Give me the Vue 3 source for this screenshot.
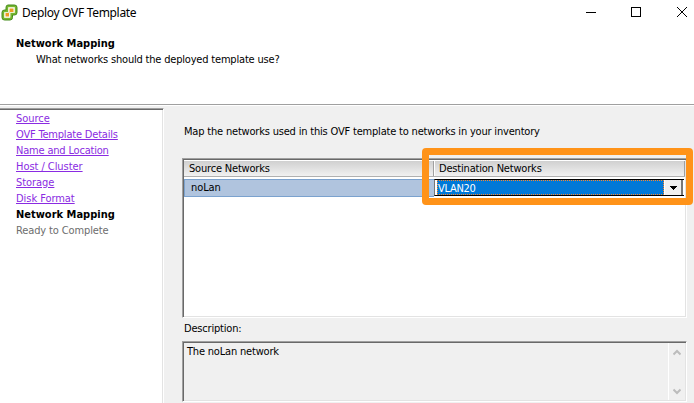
<script setup>
const visited = ['Source', 'OVF Template Details', 'Name and Location', 'Host / Cluster', 'Storage', 'Disk Format']
</script>

<template>
  <div class="window">
    <header class="titlebar">
      <svg class="logo" width="17" height="17" viewBox="0 0 17 17">
        <path d="M7 1h6.500q2.500 0 2.500 2.500v5q0 2.500-2.500 2.500h-2v2.500q0 2.500-2.500 2.500h-5.500q-2.500 0-2.500-2.500v-5q0-2.500 2.500-2.500h1.500v-2.500q0-2.500 2-2.500z" fill="#77b62e" stroke="#458b1c" />
        <path d="M7.500 3.500h6v5h-4.500v5h-5.500v-5h4z" fill="#fff" stroke="#e4f2d0" />
        <path d="M8.500 4.500h4v3.500h-3.500l-1 1v3.500h-3.500v-3.500h3l1-1z" fill="#ef9b22" />
      </svg>
      <span class="title">Deploy OVF Template</span>
      <svg class="controls" width="104" height="24" viewBox="0 0 104 24" shape-rendering="crispEdges">
        <path d="M0 12.500h10M45.500 7.500h9v9h-9z" fill="none" stroke="#000" />
        <path d="M91 7l10 10M101 7l-10 10" fill="none" stroke="#000" shape-rendering="auto" />
      </svg>
    </header>
    <section class="intro">
      <h1>Network Mapping</h1>
      <p>What networks should the deployed template use?</p>
    </section>
    <div class="body">
      <nav class="steps">
        <a v-for="s in visited" :key="s" :class="{ short: s.length < 15 }">{{ s }}</a>
        <b>Network Mapping</b>
        <span class="pending">Ready to Complete</span>
      </nav>
      <main class="content">
        <p class="lead">Map the networks used in this OVF template to networks in your inventory</p>
        <div class="table">
          <div class="thead">
            <div class="th source">Source Networks</div>
            <div class="th dest">Destination Networks</div>
          </div>
          <div class="row">
            <div class="name">noLan</div>
            <div class="combo">
              <div class="value">VLAN20</div>
              <div class="arrow">
                <svg width="7" height="4" viewBox="0 0 7 4" shape-rendering="crispEdges"><path d="M0 0h7v1h-1v1h-1v1h-1v1h-1v-1h-1v-1h-1v-1h-1z" /></svg>
              </div>
            </div>
          </div>
          <div class="highlight"></div>
        </div>
        <p class="label">Description:</p>
        <div class="desc">
          <div class="text">The noLan network</div>
          <div class="scroll">
            <svg width="8" height="7" viewBox="0 0 8 7"><path d="M.5 5.500L4 2l3.500 3.500" /></svg>
            <svg width="8" height="7" viewBox="0 0 8 7"><path d="M.5 1.500L4 5l3.500-3.500" /></svg>
          </div>
        </div>
      </main>
    </div>
  </div>
</template>

<style>
body { margin: 0; overflow: hidden; }
</style>

<style scoped>
* { box-sizing: border-box; }
h1, p { margin: 0; font-size: inherit; font-weight: inherit; }
.window { width: 694px; height: 403px; background: #fff; display: flex; flex-direction: column; overflow: hidden; font: 11px/16px "DejaVu Sans Condensed", "DejaVu Sans", sans-serif; font-stretch: condensed; letter-spacing: -0.19px; color: #000; white-space: nowrap; }
.titlebar { height: 24px; display: flex; flex: none; }
.logo { margin: 4px 0 0 1px; }
.title { font: 12px/24px "Noto Sans", sans-serif; letter-spacing: -0.31px; margin: 1px 0 0 4px; flex: 1; }
.controls { margin-right: 4px; }
.intro { height: 80px; padding: 12px 0 0 16px; flex: none; }
.intro p { padding-left: 20px; }
h1, b { font-weight: bold; letter-spacing: 0; }
.body { flex: 1; display: flex; background: #f0f0f0; border-top: 1px solid #a0a0a0; box-shadow: inset 0 1px #fff; padding-top: 3px; min-height: 0; }
.steps { width: 164px; height: 302px; background: #fff; border-top: 1px solid #a0a0a0; border-right: 1px solid #fff; box-shadow: inset 0 1px #696969, inset -1px 0 #e3e3e3; padding: 2px 0 0 16px; display: flex; flex-direction: column; align-items: flex-start; }
.steps a { color: #8a2be2; text-decoration: underline; text-underline-offset: 1px; text-decoration-thickness: 1px; }
.steps .short { letter-spacing: -0.05px; }
.pending { color: #6d6d6d; letter-spacing: -0.12px; }
.content { flex: 1; padding: 16px 0 0 18px; }
.lead { padding-left: 2px; height: 34px; }
.table { position: relative; width: 505px; height: 160px; background: #fff; border: 1px solid; border-color: #a0a0a0 #fff #fff #a0a0a0; box-shadow: inset 1px 1px #696969, inset -1px -1px #e3e3e3; padding: 1px; }
.thead { display: flex; height: 17px; border-top: 1px solid #fff; border-bottom: 1px solid #b0b0b0; background: linear-gradient(#d0d0d0, #f1f1f1); line-height: 15px; }
.th { padding-left: 5px; }
.source { width: 250px; border-right: 1px solid #a0a0a0; }
.dest { flex: 1; border-left: 1px solid #fff; border-right: 1px solid #a0a0a0; padding-left: 4px; }
.row { display: flex; height: 18px; margin-top: 2px; }
.name { width: 250px; background: #b0c4de; border: 1px solid #7ba2ce; border-right: 0; padding-left: 6px; line-height: 15px; letter-spacing: -0.1px; }
.combo { width: 250px; height: 17px; display: flex; border-top: 1px solid #000; border-bottom: 1px solid #000; border-left: 1px solid #777; padding-left: 2px; }
.value { width: 227px; background: #0078d7; border: 1px dotted #ff8728; color: #fff; line-height: 15px; letter-spacing: -0.3px; }
.arrow { width: 18px; margin-left: 1px; background: #f0f0f0; border-right: 2px solid #777; display: flex; justify-content: center; align-items: center; padding-left: 1px; }
.highlight { position: absolute; left: 239px; top: -11px; width: 271px; height: 57px; border: 7px solid #ff9319; border-radius: 4px; }
.label { height: 23px; line-height: 22px; padding-left: 2px; }
.desc { width: 505px; height: 61px; border: 1px solid; border-color: #a0a0a0 #fff #fff #a0a0a0; box-shadow: inset 1px 1px #696969, inset -1px -1px #e3e3e3; padding: 1px; display: flex; }
.text { flex: 1; padding: 1px 0 0 3px; }
.scroll { width: 17px; border-left: 1px solid #fff; display: flex; flex-direction: column; justify-content: space-between; align-items: center; padding: 6px 0 5px; }
.scroll path { fill: none; stroke: #bcbcbc; stroke-width: 2; }
</style>
